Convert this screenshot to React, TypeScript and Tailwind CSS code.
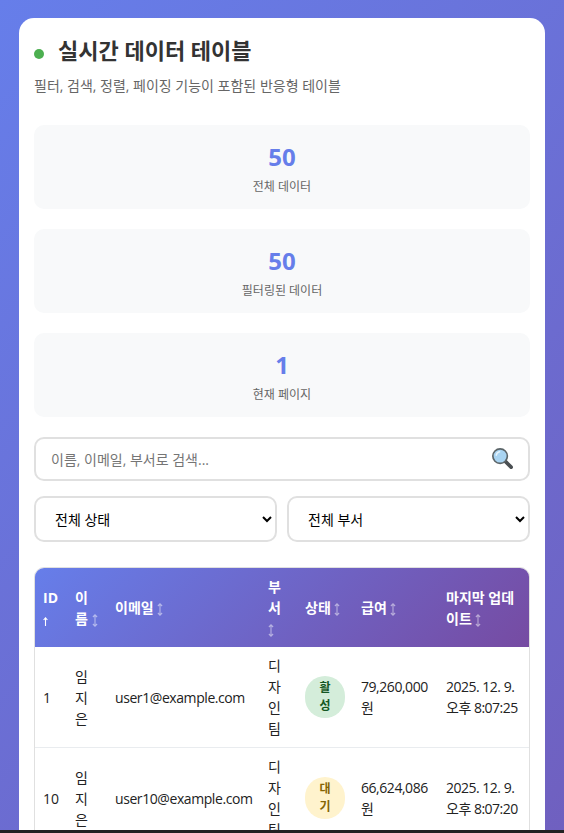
import { useState } from 'react';

const font = 'font-["Open_Sans","Noto_Sans_CJK_KR",sans-serif]';

const stats = [
  { value: '50', label: '전체 데이터' },
  { value: '50', label: '필터링된 데이터' },
  { value: '1', label: '현재 페이지' },
];

const columns = [
  { label: 'ID', active: true, width: 'w-[32px]' },
  { label: '이름', width: 'w-[40px]' },
  { label: '이메일', width: 'w-[153px]' },
  { label: '부서', width: 'w-[37px]' },
  { label: '상태', width: 'w-[56px]' },
  { label: '급여', width: 'w-[85px]' },
  { label: '마지막 업데이트', width: 'w-[91px]' },
];

const rows = [
  { id: 1, name: '임지은', email: 'user1@example.com', dept: '디자인팀', status: '활성', statusClass: 'bg-[#d4edda] text-[#155724]', salary: '79,260,000원', updated: '2025. 12. 9. 오후 8:07:25' },
  { id: 10, name: '임지은', email: 'user10@example.com', dept: '디자인팀', status: '대기', statusClass: 'bg-[#fff3cd] text-[#856404]', salary: '66,624,086원', updated: '2025. 12. 9. 오후 8:07:20' },
];

function SearchGlyph() {
  return (
    <svg width="23" height="23" viewBox="0 0 24 24" className="absolute right-[16px] top-[10px]">
      <path d="M14.5 14.5 L21 21" stroke="#4a4f52" strokeWidth="3.8" strokeLinecap="round" />
      <circle cx="9.5" cy="9.5" r="7.6" fill="#a9d4f2" stroke="#5b6468" strokeWidth="1.7" />
      <path d="M5.5 8.5 A4.5 4.5 0 0 1 9 5" stroke="#e4f3fc" strokeWidth="1.6" fill="none" strokeLinecap="round" />
    </svg>
  );
}

function SortArrow({ active }: { active?: boolean }) {
  if (active) {
    return (
      <svg width="5" height="9" viewBox="0 0 5 9" fill="none" stroke="white" strokeWidth="1.1" className="inline-block align-[-2px]">
        <path d="M2.5 9V1M.6 3 2.5.8 4.4 3" />
      </svg>
    );
  }
  return (
    <svg width="6" height="13" viewBox="0 0 6 13" fill="none" stroke="white" strokeWidth="1.1" className="inline-block align-[-3px] opacity-50">
      <path d="M3 1v11M.9 3 3 .8 5.1 3M.9 10 3 12.2 5.1 10" />
    </svg>
  );
}

export default function App() {
  const [query, setQuery] = useState('');

  return (
    <div className={`relative h-[833px] overflow-hidden bg-[linear-gradient(135deg,#667eea_0%,#764ba2_100%)] bg-[length:100%_1800px] bg-no-repeat px-[19px] pt-[18px] ${font}`}>
      <div className="rounded-[15px] bg-white p-[15px] pt-[14px]">
        {/* Header */}
        <h1 className="flex items-center text-[22px] font-bold leading-[36px] text-[#333]">
          <span className="mr-[14px] mt-[7px] h-[10px] w-[10px] rounded-full bg-[#4caf50]" />
          실시간 데이터 테이블
        </h1>
        <p className="mt-[7px] text-[14px] leading-[21px] text-[#666]">
          필터, 검색, 정렬, 페이징 기능이 포함된 반응형 테이블
        </p>

        {/* Stats */}
        <div className="mt-[29px] flex flex-col gap-[20px]">
          {stats.map((stat) => (
            <div key={stat.label} className="h-[84px] rounded-[10px] bg-[#f8f9fa] pt-[14px] text-center">
              <div className="text-[24px] font-bold leading-[36px] text-[#667eea]">{stat.value}</div>
              <div className="mt-[3px] text-[12px] leading-[18px] text-[#666]">{stat.label}</div>
            </div>
          ))}
        </div>

        {/* Search */}
        <div className="relative mt-[20px]">
          <input
            value={query}
            onChange={(e) => setQuery(e.target.value)}
            placeholder="이름, 이메일, 부서로 검색..."
            className="h-[44px] w-full rounded-[10px] border-2 border-[#e0e0e0] bg-white px-[15px] text-[14px] text-black placeholder:text-[#757575] outline-none"
          />
          <SearchGlyph />
        </div>

        {/* Filters */}
        <div className="mt-[15px] flex gap-[10px]">
          <select className="h-[46px] min-w-0 flex-1 rounded-[10px] border-2 border-[#e0e0e0] bg-white px-[15px] text-[14px] text-black">
            <option>전체 상태</option>
          </select>
          <select className="h-[46px] min-w-0 flex-1 rounded-[10px] border-2 border-[#e0e0e0] bg-white px-[15px] text-[14px] text-black">
            <option>전체 부서</option>
          </select>
        </div>

        {/* Table */}
        <div className="mt-[25px] overflow-hidden rounded-[10px] border border-[#e0e0e0]">
          <table className="w-full table-fixed border-collapse text-[14px] leading-[21px] text-[#222]">
            <thead className="bg-[linear-gradient(135deg,#667eea_0%,#764ba2_100%)] text-white">
              <tr>
                {columns.map((col) => (
                  <th key={col.label} className={`${col.width} px-2 py-[8px] text-left font-bold`}>
                    {col.label} <SortArrow active={col.active} />
                  </th>
                ))}
              </tr>
            </thead>
            <tbody>
              {rows.map((row) => (
                <tr key={row.id} className="border-b border-[#e9ecef]">
                  <td className="p-2">{row.id}</td>
                  <td className="p-2">{row.name}</td>
                  <td className="p-2 tracking-[-0.42px]">{row.email}</td>
                  <td className="p-2">{row.dept}</td>
                  <td className="p-2">
                    <span className={`inline-block rounded-[20px] px-3 py-[3px] align-middle text-center text-[12px] font-bold leading-[18px] ${row.statusClass}`}>
                      {row.status}
                    </span>
                  </td>
                  <td className="p-2 tracking-[-0.45px]">{row.salary}</td>
                  <td className="p-2 tracking-[-0.5px]">{row.updated}</td>
                </tr>
              ))}
            </tbody>
          </table>
        </div>
      </div>

      {/* window edge */}
      <div className="absolute inset-x-0 bottom-0 h-[3px] bg-[#222]" />
    </div>
  );
}
